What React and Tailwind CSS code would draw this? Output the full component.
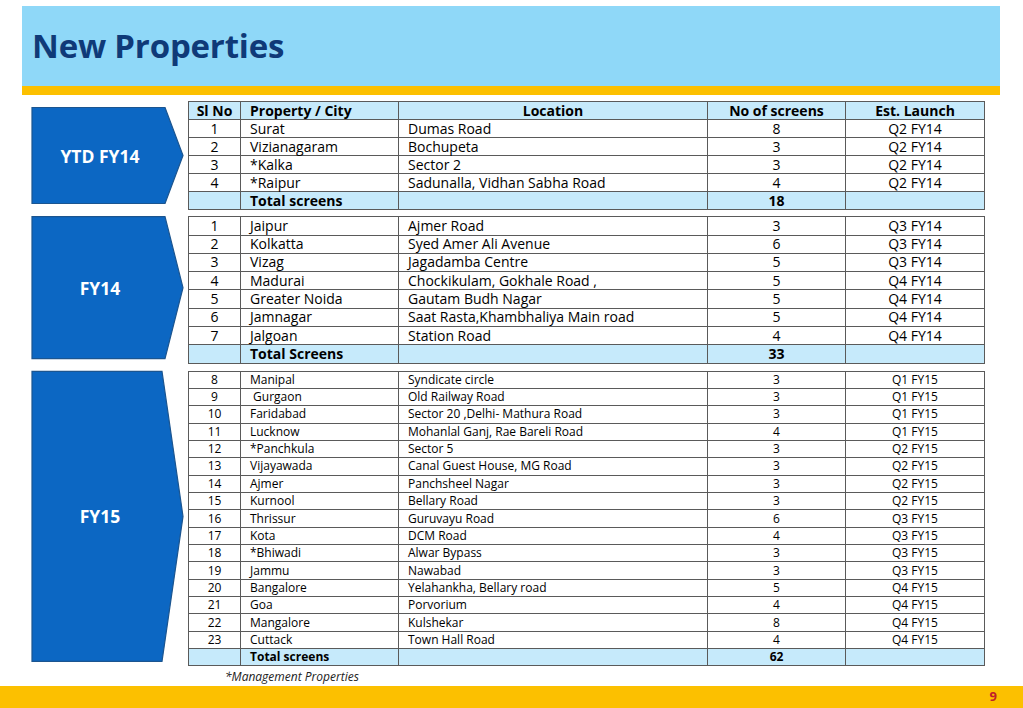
import React from 'react';

// Property rollout slide - YTD FY14 / FY14 / FY15
const ytd = [
  ['1', 'Surat', 'Dumas Road', '8', 'Q2 FY14'],
  ['2', 'Vizianagaram', 'Bochupeta', '3', 'Q2 FY14'],
  ['3', '*Kalka', 'Sector 2', '3', 'Q2 FY14'],
  ['4', '*Raipur', 'Sadunalla, Vidhan Sabha Road', '4', 'Q2 FY14'],
];

const fy14 = [
  ['1', 'Jaipur', 'Ajmer Road', '3', 'Q3 FY14'],
  ['2', 'Kolkatta', 'Syed Amer Ali Avenue', '6', 'Q3 FY14'],
  ['3', 'Vizag', 'Jagadamba Centre', '5', 'Q3 FY14'],
  ['4', 'Madurai', 'Chockikulam, Gokhale Road ,', '5', 'Q4 FY14'],
  ['5', 'Greater Noida', 'Gautam Budh Nagar', '5', 'Q4 FY14'],
  ['6', 'Jamnagar', 'Saat Rasta,Khambhaliya Main road', '5', 'Q4 FY14'],
  ['7', 'Jalgoan', 'Station Road', '4', 'Q4 FY14'],
];

const fy15 = [
  ['8', 'Manipal', 'Syndicate circle', '3', 'Q1 FY15'],
  ['9', '\u00a0Gurgaon', 'Old Railway Road', '3', 'Q1 FY15'],
  ['10', 'Faridabad', 'Sector 20 ,Delhi- Mathura Road', '3', 'Q1 FY15'],
  ['11', 'Lucknow', 'Mohanlal Ganj, Rae Bareli Road', '4', 'Q1 FY15'],
  ['12', '*Panchkula', 'Sector 5', '3', 'Q2 FY15'],
  ['13', 'Vijayawada', 'Canal Guest House, MG Road', '3', 'Q2 FY15'],
  ['14', 'Ajmer', 'Panchsheel Nagar', '3', 'Q2 FY15'],
  ['15', 'Kurnool', 'Bellary Road', '3', 'Q2 FY15'],
  ['16', 'Thrissur', 'Guruvayu Road', '6', 'Q3 FY15'],
  ['17', 'Kota', 'DCM Road', '4', 'Q3 FY15'],
  ['18', '*Bhiwadi', 'Alwar Bypass', '3', 'Q3 FY15'],
  ['19', 'Jammu', 'Nawabad', '3', 'Q3 FY15'],
  ['20', 'Bangalore', 'Yelahankha, Bellary road', '5', 'Q4 FY15'],
  ['21', 'Goa', 'Porvorium', '4', 'Q4 FY15'],
  ['22', 'Mangalore', 'Kulshekar', '8', 'Q4 FY15'],
  ['23', 'Cuttack', 'Town Hall Road', '4', 'Q4 FY15'],
];

const cell = 'border border-[#5a5a5a] p-0 leading-none';

function Arrow({ label, tall, className }) {
  return (
    <div className={`relative w-[154px] self-stretch flex items-center ${className}`}>
      <svg
        className="absolute inset-0 w-full h-full"
        viewBox="0 0 154 100"
        preserveAspectRatio="none"
      >
        <polygon
          points={tall ? '1,0.5 131,0.5 152,50 131,99.5 1,99.5' : '1,0.5 134,0.5 152,50 134,99.5 1,99.5'}
          fill="#0c67c3"
          stroke="#1b5590"
          strokeWidth="1.2"
          vectorEffect="non-scaling-stroke"
        />
      </svg>
      <span className="relative w-[138px] text-center text-white font-bold text-[17.5px]">{label}</span>
    </div>
  );
}

function PropTable({ rows, header, total, totalLabel, rowH, small }) {
  const txt = small ? 'text-[12px]' : 'text-[14px]';
  return (
    <table className={`table-fixed border-collapse w-[796px] ${txt} text-black`}>
      <colgroup>
        <col className="w-[52px]" />
        <col className="w-[158px]" />
        <col className="w-[309px]" />
        <col className="w-[138px]" />
        <col className="w-[139px]" />
      </colgroup>
      <tbody>
        {header && (
          <tr className={`${rowH} bg-[#c6eafb] font-bold`}>
            <td className={`${cell} text-center`}>Sl No</td>
            <td className={`${cell} pl-[9px]`}>Property / City</td>
            <td className={`${cell} text-center`}>Location</td>
            <td className={`${cell} text-center`}>No of screens</td>
            <td className={`${cell} text-center`}>Est. Launch</td>
          </tr>
        )}
        {rows.map((r) => (
          <tr key={r[0]} className={rowH}>
            <td className={`${cell} text-center`}>{r[0]}</td>
            <td className={`${cell} pl-[9px] whitespace-pre`}>{r[1]}</td>
            <td className={`${cell} pl-[9px]`}>{r[2]}</td>
            <td className={`${cell} text-center`}>{r[3]}</td>
            <td className={`${cell} text-center`}>{r[4]}</td>
          </tr>
        ))}
        <tr className={`${rowH} bg-[#c6eafb] font-bold`}>
          <td className={cell}></td>
          <td className={`${cell} pl-[9px]`}>{totalLabel}</td>
          <td className={cell}></td>
          <td className={`${cell} text-center`}>{total}</td>
          <td className={cell}></td>
        </tr>
      </tbody>
    </table>
  );
}

export default function App() {
  return (
    <div className="w-[1023px] h-[708px] bg-white flex flex-col overflow-hidden font-['Open_Sans','Noto_Sans',sans-serif]">
      {/* header */}
      <div className="mt-[6px] ml-[22px] w-[978px] h-[82px] bg-[#8fd8f8] flex items-center pl-[10px]">
        <h1 className="text-[33px] font-bold text-[#0f3a78] tracking-[-0.2px] pb-[1px]">New Properties</h1>
      </div>
      <div className="ml-[22px] w-[978px] h-[9px] bg-[#fcc000]" />

      {/* sections */}
      <div className="flex flex-col pl-[31px] pt-[6px]">
        <div className="flex gap-[3px]">
          <Arrow label="YTD FY14" className="my-[6px]" />
          <PropTable rows={ytd} header total="18" totalLabel="Total screens" rowH="h-[18px]" />
        </div>
        <div className="flex gap-[3px] mt-[6px]">
          <Arrow label="FY14" className="mb-[4px]" />
          <PropTable rows={fy14} total="33" totalLabel="Total Screens" rowH="h-[18.3px]" />
        </div>
        <div className="flex gap-[3px] mt-[7px]">
          <Arrow label="FY15" tall className="-mt-[1px] mb-[4px]" />
          <PropTable rows={fy15} total="62" totalLabel="Total screens" rowH="h-[17.35px]" small />
        </div>
      </div>

      <div className="pl-[225px] pt-[2px] text-[12px] italic text-[#222]">*Management Properties</div>

      {/* footer */}
      <div className="mt-auto h-[22px] bg-[#fcc000] flex items-center justify-end pr-[26px]">
        <span className="text-[13px] font-bold text-[#c0202a]">9</span>
      </div>
    </div>
  );
}
